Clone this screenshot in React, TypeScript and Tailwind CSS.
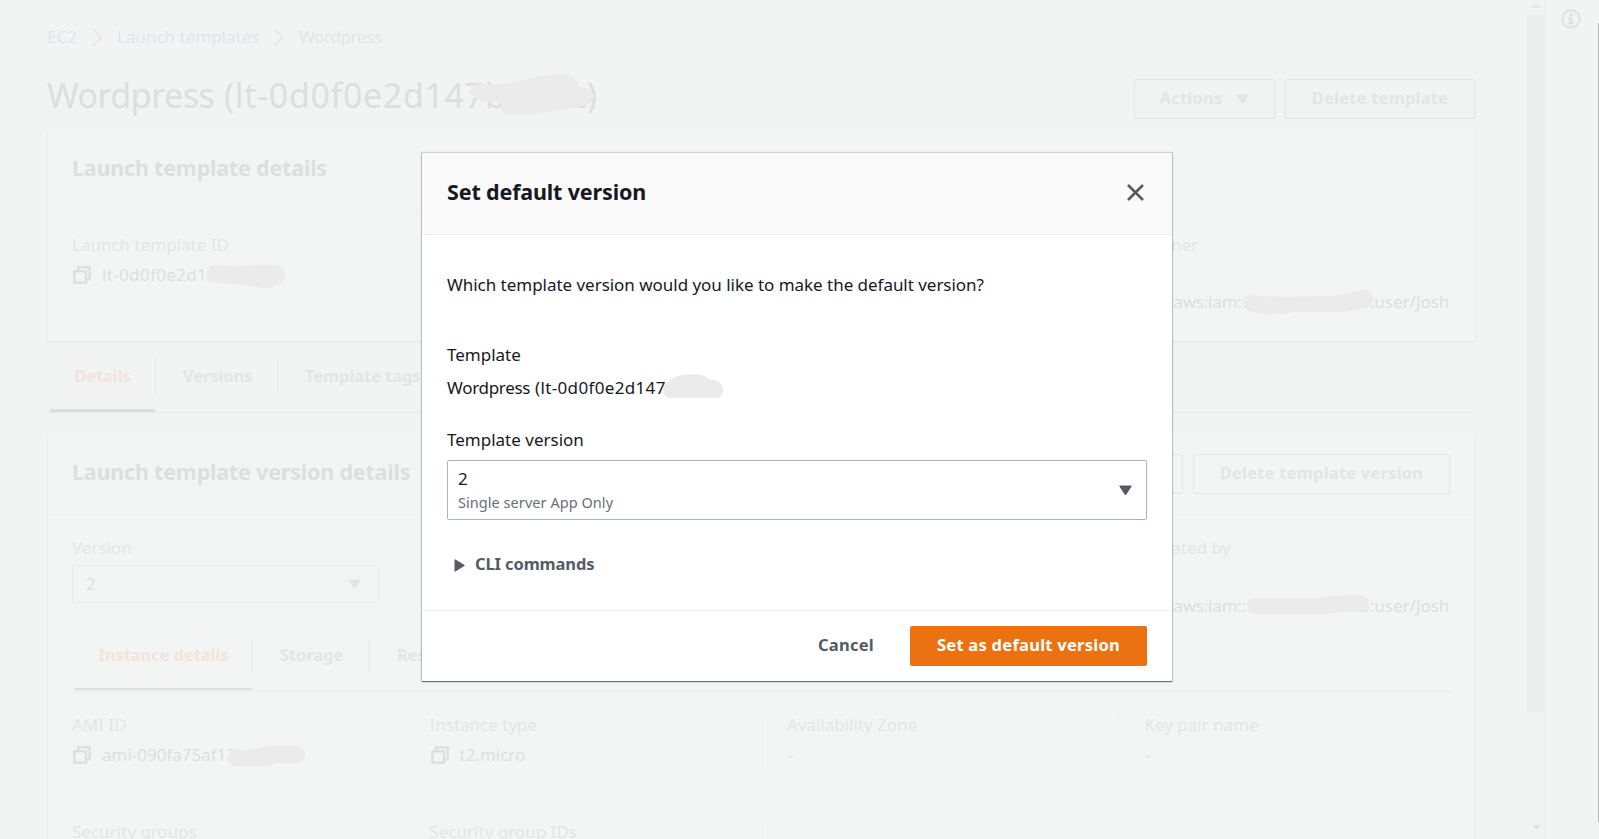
import type { ReactNode } from "react";

function Caret({ className = "" }: { className?: string }) {
  return (
    <svg className={className} width="13" height="11" viewBox="0 0 13 11" fill="currentColor">
      <path d="M1 .5h11c.6 0 .8.6.5 1L7.2 9.7c-.4.5-1 .5-1.4 0L.5 1.500C.2 1.100.4.5 1 .5z" />
    </svg>
  );
}

function CopyIcon() {
  return (
    <svg className="shrink-0" width="18" height="18" viewBox="0 0 18 18" fill="none" stroke="#dcdedd" strokeWidth="2.200">
      <path d="M1.300 5.300h11.700v11.400H1.300z" />
      <path d="M5 5V1.300h11.700v12H13" />
    </svg>
  );
}

function Chevron() {
  return (
    <svg width="11" height="19" viewBox="0 0 11 19" fill="none" stroke="#e7e9e9" strokeWidth="2">
      <path d="M1 1l8.500 8.500L1 18" />
    </svg>
  );
}

function Smudge({ d, viewBox, className }: { d: string; viewBox: string; className: string }) {
  return (
    <svg className={`absolute ${className}`} viewBox={viewBox}>
      <path d={d} fill="#ebebeb" />
    </svg>
  );
}

function GhostButton({ children, className }: { children?: ReactNode; className: string }) {
  return (
    <button
      className={`flex h-10 shrink-0 items-center justify-center rounded-[2px] border border-[#e4e6e6] pb-[2px] text-[16.500px] font-bold tracking-[0.220px] text-[#e3e5e6] ${className}`}
    >
      {children}
    </button>
  );
}

function Column({
  label,
  last = false,
  divider = "h-[86px]",
  children,
}: {
  label?: string;
  last?: boolean;
  divider?: string;
  children?: ReactNode;
}) {
  return (
    <div className={last ? "w-[304px]" : "flex w-[357.500px]"}>
      <div className={last ? "" : "w-[331px]"}>
        <div className="-ml-px h-[30px] text-[#e4e5e5]">{label}</div>
        {children}
      </div>
      {!last && <div className={`w-px bg-[#f0f2f1] ${divider}`} />}
    </div>
  );
}

function Background() {
  return (
    <div className="h-full w-[1527px] shrink-0 overflow-hidden pl-[47px] pt-[23px] text-[17px] leading-[28px] text-[#dddfdf]">
      <nav className="flex h-7 items-center text-[#dbe6ee]">
        <span className="w-[45px]">EC2</span>
        <Chevron />
        <span className="ml-[14px] w-[156px]">Launch templates</span>
        <Chevron />
        <span className="ml-[15px] tracking-[-0.350px] text-[#e4e5e5]">Wordpress</span>
      </nav>

      <div className="mt-[19px] flex h-[60px] w-[1428px] justify-between">
        <div className="relative w-[550px]">
          <h1 className="flex pt-px text-[34px] leading-[48px]">
            <span className="w-[177px] tracking-[-0.500px]">Wordpress</span>
            <span className="flex-1 tracking-[0.650px]">(lt-0d0f0e2d147b</span>
            <span>c)</span>
          </h1>
          <Smudge
            className="left-[420px] top-0 h-[48px] w-[130px]"
            viewBox="420 0 130 48"
            d="M423 22c1-7 4-8 12-8 15 1 32-1 48-6 12-2 21-4 31-4 11 0 16 6 18 12 10 2 14 5 15 9 0 6-5 10-12 11-8 2-18 3-29 5-14 3-30 4-47 3-4-2-5-6-6-12-10 0-26 1-30-10z"
          />
        </div>
        <div className="flex gap-[10px] pt-[9px]">
          <GhostButton className="w-[141px] gap-[14px]">
            Actions <Caret className="mt-[2px]" />
          </GhostButton>
          <GhostButton className="w-[190px]">Delete template</GhostButton>
        </div>
      </div>

      <section className="h-[212px] w-[1429px] border border-t-[#f0f2f2] border-x-[#eceeee] border-b-[#e8eaea] bg-[#f3f5f4] shadow-[0_1px_1px_#eceeee]">
        <div className="h-[81px] border-b border-[#f0f2f1] pl-[24px] pt-[20px]">
          <h2 className="text-[21.500px] font-bold leading-[34px] tracking-[-0.200px]">Launch template details</h2>
        </div>
        <div className="flex pl-[25px] pt-[19px]">
          <Column label="Launch template ID">
            <div className="relative flex h-7 items-center">
              <CopyIcon />
              <span className="ml-[11px] tracking-[0.350px]">lt-0d0f0e2d1</span>
              <Smudge
                className="left-[132px] top-[2px] h-[26px] w-[82px]"
                viewBox="0 0 82 26"
                d="M1 12C2 4 6 2 12 2c22 2 40-1 60 0 5 1 8 5 8 10 0 6-4 9-9 9-3 6-16 4-25 2-12-2-24-2-35-3-6 0-10-3-10-8z"
              />
            </div>
          </Column>
          <Column />
          <Column />
          <Column label="Owner" last>
            <div className="relative mt-[27px] flex justify-between">
              <span className="-ml-[3px] tracking-[-0.200px]">arn:aws:iam:</span>
              <span>5:user/Josh</span>
              <Smudge
                className="left-[96px] top-[1px] h-[27px] w-[132px]"
                viewBox="0 0 132 27"
                d="M1 14C1 8 5 6 10 6c28 3 58 1 81 1 14-1 21-6 31-6 6 0 9 4 9 9 0 6-3 8-9 9-7 1-15 4-24 4H52c-9 2-23 4-36 1C7 23 1 20 1 14z"
              />
            </div>
          </Column>
        </div>
      </section>

      <div className="flex h-[71px] w-[1429px] border-b border-[#e8eaea] pl-[3px] text-[16.500px] font-bold tracking-[-0.080px] text-[#e3e5e6]">
        <div className="flex w-[105px] flex-col items-center justify-between pt-[20px]">
          <span className="text-[#f3e3da]">Details</span>
          <span className="h-[3px] w-full bg-[#dcdedd]" />
        </div>
        <div className="mt-4 h-9 w-px bg-[#e8eaea]" />
        <div className="w-[121px] pl-[27px] pt-[20px]">Versions</div>
        <div className="mt-4 h-9 w-px bg-[#e8eaea]" />
        <div className="pl-[27px] pt-[20px]">Template tags</div>
      </div>

      <section className="mt-[21px] h-[420px] w-[1429px] border border-x-[#eceeee] border-t-[#f0f2f2] bg-[#f3f5f4]">
        <div className="flex h-[80px] justify-between border-b border-[#f0f2f1] pl-[24px] pr-[25px] pt-[19px]">
          <h2 className="pt-px text-[21.500px] font-bold leading-[34px] tracking-[-0.200px]">Launch template version details</h2>
          <div className="flex gap-[10px]">
            <GhostButton className="w-[138px]" />
            <GhostButton className="w-[257px]">Delete template version</GhostButton>
          </div>
        </div>
        <div className="flex h-[122px] pl-[25px] pt-[19px]">
          <Column label="Version">
            <div className="-ml-px mt-px flex h-[38px] w-[307px] items-center justify-between rounded-[2px] border border-[#eaecec] pl-[13px] pr-[17px]">
              2 <Caret className="text-[#e3e5e6]" />
            </div>
          </Column>
          <Column />
          <Column />
          <Column label="Created by" last>
            <div className="relative mt-[28px] flex justify-between">
              <span className="-ml-[3px] tracking-[-0.200px]">arn:aws:iam::</span>
              <span>5:user/Josh</span>
              <Smudge
                className="left-[100px] top-[1px] h-[24px] w-[125px]"
                viewBox="0 0 125 24"
                d="M1 13c0-6 3-8 9-8h65c10-3 24-3 39-3 7 1 9 4 9 9 0 6-4 8-9 8-15-1-27 2-41 2H10c-6 0-9-3-9-8z"
              />
            </div>
          </Column>
        </div>
        <div className="ml-[24px] flex h-[55px] w-[1379px] border-b border-[#e8eaea] pl-[3px] text-[16.500px] font-bold tracking-[-0.080px] text-[#e3e5e6]">
          <div className="flex w-[177px] flex-col items-center justify-between pb-px pt-[4px]">
            <span className="text-[#f3e3da]">Instance details</span>
            <span className="h-[2px] w-full bg-[#dcdedd]" />
          </div>
          <div className="h-9 w-px bg-[#e8eaea]" />
          <div className="w-[116px] pl-[27px] pt-[4px]">Storage</div>
          <div className="h-9 w-px bg-[#e8eaea]" />
          <div className="pl-[27px] pt-[4px]">Res</div>
        </div>
        <div className="flex h-[126px] pl-[25px] pt-[19px]">
          <Column label="AMI ID" divider="mt-1 h-[54px]">
            <div className="relative flex h-7 items-center">
              <CopyIcon />
              <span className="ml-[11px]">ami-090fa75af12</span>
              <Smudge
                className="left-[154px] top-[4px] h-[22px] w-[79px]"
                viewBox="0 0 79 22"
                d="M1 12c1-5 4-7 9-7 12 1 22-3 35-4h24c6 0 9 4 9 9s-3 8-8 8H49c-5 3-9 3-14 3H10c-6 0-9-4-9-9z"
              />
            </div>
          </Column>
          <Column label="Instance type" divider="mt-1 h-[54px]">
            <div className="flex h-7 items-center">
              <CopyIcon />
              <span className="ml-[11px]">t2.micro</span>
            </div>
          </Column>
          <Column label="Availability Zone" divider="mt-1 h-[54px]">
            -
          </Column>
          <Column label="Key pair name" last>
            -
          </Column>
        </div>
        <div className="flex pl-[25px]">
          <Column label="Security groups" divider="mt-1 h-[54px]" />
          <Column label="Security group IDs" divider="mt-1 h-[54px]" />
        </div>
      </section>
    </div>
  );
}

function SidePanels() {
  return (
    <div className="flex h-full w-[72px]">
      <div className="flex w-[19px] flex-col items-center border-r border-[#eceeee]">
        <svg className="h-[15px] w-[10px] shrink-0 pt-[3px]" viewBox="0 0 10 12" fill="#e6e8e8">
          <path d="M5 0l5 5H0z" />
        </svg>
        <div className="h-[697px] w-[17px] self-start bg-[#eceeee]" />
        <svg className="mt-[113px] h-[5px] w-[9px]" viewBox="0 0 9 5" fill="#e0e2e2">
          <path d="M0 0h9L4.500 5z" />
        </svg>
      </div>
      <div className="flex flex-1 justify-between">
        <svg className="ml-[14px] mt-[8px]" width="22" height="22" viewBox="0 0 22 22" fill="none">
          <circle cx="11" cy="11" r="8.800" stroke="#e2e4e4" strokeWidth="2.400" />
          <path d="M9.500 5.500h3v2.600h-3zM8 9.300h4.600v5H14v1.900H8v-1.900h1.600v-3.100H8z" fill="#e0e2e2" />
        </svg>
        <div className="mt-[23px] h-[799px] w-px bg-[#b9bbbb]" />
      </div>
    </div>
  );
}

function Modal() {
  return (
    <div
      role="dialog"
      className="absolute left-[422px] top-[153px] flex h-[528px] w-[750px] flex-col bg-white text-[17px] leading-[28px] text-[#16191f] shadow-[0_1px_1px_0_rgba(0,28,36,0.5),0_0_1px_1px_rgba(0,28,36,0.16)]"
    >
      <header className="flex h-[82px] shrink-0 items-start justify-between border-b border-[#eaeded] bg-[#fafafa] pl-[25px] pr-[28px] pt-[22px]">
        <h2 className="text-[21.500px] font-bold leading-[34px] tracking-[-0.150px]">Set default version</h2>
        <svg className="mt-[9px]" width="17" height="17" viewBox="0 0 17 17" fill="none" stroke="#545b64" strokeWidth="2.600">
          <path d="M1 1l15 15M16 1L1 16" />
        </svg>
      </header>
      <div className="flex-1 px-[25px] pt-[36px]">
        <p className="tracking-[-0.030px]">Which template version would you like to make the default version?</p>
        <p className="mt-[42px]">Template</p>
        <div className="relative mt-[5px] flex w-[273px]">
          <span className="w-[88px] tracking-[-0.300px]">Wordpress</span>
          <span className="flex-1 tracking-[0.350px]">(lt-0d0f0e2d147</span>
          <span>)</span>
          <Smudge
            className="left-[216px] top-0 h-[24px] w-[61px]"
            viewBox="0 0 61 24"
            d="M0 17C2 8 9 3 20 1c8-1 20-2 26 4 4 2 8 1 10 3 5 4 6 11 0 16H5c-3-2-5-4-5-7z"
          />
        </div>
        <p className="mt-[24px]">Template version</p>
        <div className="mt-[6px] flex h-[60px] w-[700px] items-center justify-between rounded-[2px] border border-[#aab7b8] pl-[10px] pr-[14px]">
          <div>
            <div className="h-[25px] leading-[26px]">2</div>
            <div className="h-[24px] text-[14.500px] leading-[22px] tracking-[0.050px] text-[#687078]">Single server App Only</div>
          </div>
          <Caret className="text-[#545b64]" />
        </div>
        <div className="mt-[30px] flex items-center pl-[7px] text-[16.500px] font-bold tracking-[-0.120px] text-[#545b64]">
          <svg className="mr-[10px] mt-[2px]" width="11" height="13" viewBox="0 0 11 13" fill="currentColor">
            <path d="M.5 1c0-.6.600-.8 1-.5l8.700 5.200c.5.400.5 1 0 1.400L1.500 12.500c-.4.300-1 .1-1-.5z" />
          </svg>
          CLI commands
        </div>
      </div>
      <footer className="flex h-[71px] shrink-0 justify-end border-t border-[#eaeded] pr-[25px] pt-[15px] text-[16.500px] font-bold tracking-[0.260px]">
        <button className="mr-[36px] h-10 pb-[2px] text-[#545b64]">Cancel</button>
        <button className="h-10 w-[237px] rounded-[2px] bg-[#ec7211] pb-[2px] text-white">Set as default version</button>
      </footer>
    </div>
  );
}

export default function App() {
  return (
    <div className="relative flex h-[839px] w-[1599px] overflow-hidden whitespace-nowrap bg-[#f1f4f3] font-['Noto_Sans',sans-serif]">
      <Background />
      <SidePanels />
      <Modal />
    </div>
  );
}
